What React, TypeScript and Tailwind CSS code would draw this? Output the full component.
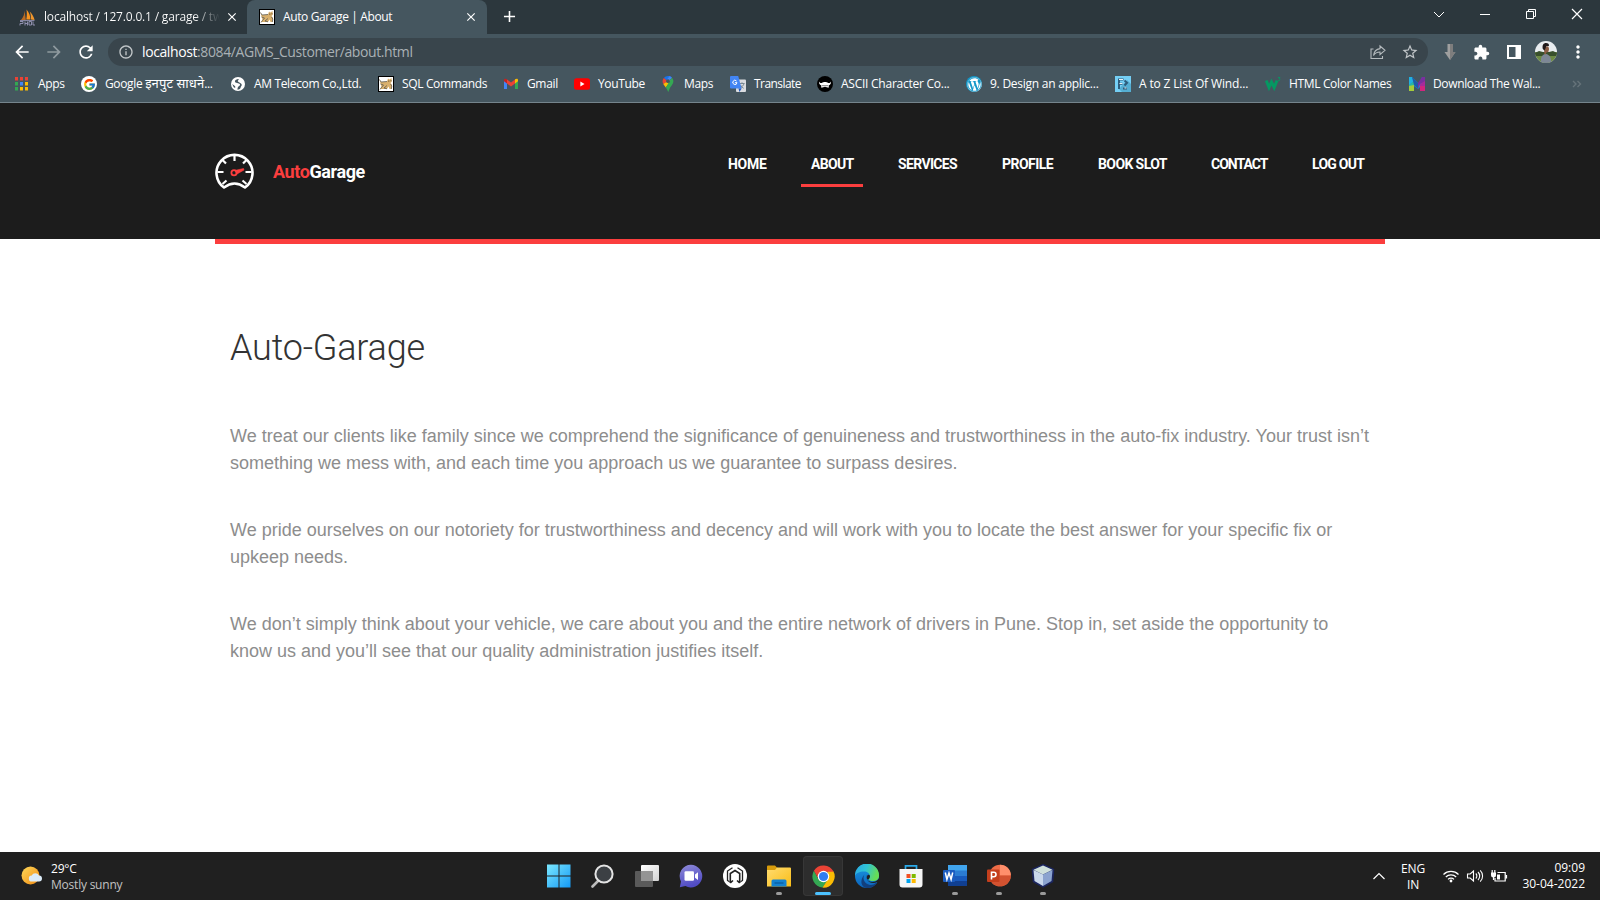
import React from "react";
import { FcGoogle } from "react-icons/fc";
import { FaWordpress } from "react-icons/fa";
import { MdArrowBack, MdArrowForward, MdRefresh, MdInfoOutline, MdStarBorder, MdExtension, MdMoreVert, MdClose, MdAdd } from "react-icons/md";

function CatIcon() {
  return (
    <svg viewBox="0 0 16 16" className="size-4 shrink-0">
      <rect width="16" height="16" fill="#000" />
      <rect x="1" y="1" width="14" height="14" fill="#fff" />
      <path d="M1.500 3.500l1.500 2.500 6-.5 1-3 1.500 1 2-1.500.3 3.500-1.300 1.500 1.500 2-.5 4h-2l-1-2.500-1.500 2.500H2l1.500-2.500-1-3z" fill="#d9b06c" />
      <path d="M1.500 3.500L3 6l6-.5M2.500 8L5.500 9 3.500 11.500 2 13.500M9 9.500L6 12l3 .8M12.500 8l1.300 2-.5 3" stroke="#5e5a52" strokeWidth=".8" fill="none" />
      <circle cx="10.800" cy="5" r=".6" fill="#3a2a18" />
      <circle cx="13" cy="4.800" r=".5" fill="#3a2a18" />
    </svg>
  );
}

function MySqlIcon() {
  return (
    <svg viewBox="0 0 17 17" className="h-[17px] w-[17px] shrink-0">
      <path d="M2 11C4.500 8 5.500 5 5.600 1.500L6.800 11z" fill="#b96a22" />
      <path d="M7.300 10.500C8 7 8 4 7.500 .500 10 3 11.500 7 11.400 10.500z" fill="#f7931e" />
      <path d="M12 10.500C12 7 11.500 4.500 10.700 2.500 13 4.500 15 8 15.600 11z" fill="#f0962c" />
      <path d="M1 12.500h3v2H1v2M6 12.500v4M6 14.500h2M8.500 12.500v4M10 12.500h2.500v3.500H10zM14 12.500v3.500h2M1 11.600h14.500" stroke="#9997b8" strokeWidth=".9" fill="none" />
    </svg>
  );
}

function AppsIcon() {
  const colors = ["#ea4335", "#ea4335", "#ea4335", "#34a853", "#4285f4", "#fbbc04", "#34a853", "#fbbc04", "#fbbc04"];
  return (
    <svg viewBox="0 0 14 14" className="size-3.5 shrink-0">
      {colors.map((c, i) => (
        <rect key={i} x={(i % 3) * 5 + 1} y={Math.floor(i / 3) * 5} width="3" height="3.500" fill={c} />
      ))}
    </svg>
  );
}

function GoogleIcon() {
  return (
    <span className="flex size-4 shrink-0 items-center justify-center rounded-full bg-white">
      <FcGoogle size={13} />
    </span>
  );
}

function GlobeIcon() {
  return (
    <svg viewBox="0 0 16 16" className="size-4 shrink-0">
      <circle cx="8" cy="8" r="7" fill="#fff" />
      <path d="M8 3c-2 .3-3.500 1.500-3 3 .5 1 2 .8 3 1.200s2 .3 2 1.500-1.500 1.300-2 2.300-.3 2-.8 2.600c2 .2 3.300-.9 3.500-2.300.3-1 1.300-1.600 1-2.800S10 7 9 6.300 7.500 5.500 8 4.600 9.500 3.500 8 3zM2.200 8l3 2.300 0 1.700-1.500-.8z" fill="#45565f" />
    </svg>
  );
}

function GmailIcon() {
  return (
    <svg viewBox="0 0 16 16" className="size-4 shrink-0">
      <path d="M1 4v9h3V7z" fill="#4285f4" />
      <path d="M12 7v6h3V4z" fill="#34a853" />
      <path d="M4 3.500l4 3 4-3v4l-4 3-4-3z" fill="#ea4335" />
      <path d="M1 4c0-1.500 1.500-1.800 3-.7v4.200L1 5.200z" fill="#c5221f" />
      <path d="M15 4c0-1.500-1.500-1.800-3-.7v4.200l3-2.300z" fill="#fbbc04" />
    </svg>
  );
}

function YouTubeIcon() {
  return (
    <svg viewBox="0 0 16 16" className="size-4 shrink-0">
      <rect x="0" y="2.300" width="16" height="11.400" rx="2.500" fill="#f00" />
      <path d="M6.400 5.600v4.800L10.500 8z" fill="#fff" />
    </svg>
  );
}

function MapsIcon() {
  return (
    <svg viewBox="0 0 16 16" className="size-4 shrink-0">
      <path d="M8 0a5.400 5.400 0 0 0-4.200 2L8 5.500l3.800-4.200A5.400 5.400 0 0 0 8 0z" fill="#1a73e8" />
      <path d="M3.800 2a5.500 5.500 0 0 0-.5 6L8 5.400z" fill="#ea4335" />
      <path d="M3.300 8c.7 1.300 1.700 2.300 2.500 3.500L12 3.500 8 5z" fill="#fbbc04" />
      <path d="M11.800 1.500C14.500 4.500 13.300 7.700 11.300 10 9.500 12 9 14.500 8.300 16 7.500 14.500 7 13 5.800 11.500z" fill="#34a853" />
      <path d="M8 0c1.600 0 3 .6 3.900 1.600L9 5.200 6.800 3.700 9.500.2z" fill="#4285f4" />
      <circle cx="8" cy="5.200" r="1.900" fill="#45565f" />
    </svg>
  );
}

function TranslateIcon() {
  return (
    <svg viewBox="0 0 16 16" className="size-4 shrink-0">
      <rect x="6" y="3.500" width="10" height="12.500" rx="1" fill="#dadce0" />
      <path d="M9.500 7.500h5M12 6.300v1.200M14 7.500c-.5 2-2 3.500-3.700 4.500M10.500 9c.6 1.500 1.800 2.500 3.200 3.300" stroke="#70808a" fill="none" strokeWidth=".9" />
      <path d="M1 0h7.200l3.400 12.500H1a1 1 0 0 1-1-1V1a1 1 0 0 1 1-1z" fill="#4285f4" />
      <path d="M8.500 12.500h3.100L9.500 16z" fill="#1b57c0" />
      <path d="M6.500 5A2.100 2.100 0 1 0 7 6.700H4.900" stroke="#fff" strokeWidth="1" fill="none" />
    </svg>
  );
}

function AsciiIcon() {
  return (
    <svg viewBox="0 0 16 16" className="size-4 shrink-0">
      <circle cx="8" cy="8" r="8" fill="#000" />
      <path d="M2 5.500c.6 1.300 1.500 1.700 2.800 1.500C5.700 6.200 6.800 6 8 6s2.300.2 3.200 1c1.300.2 2.200-.2 2.800-1.500.2 1.900-.5 3.100-2 3.700l-.4 2.500-3.600-.9-3.600.9L4 9.200C2.500 8.600 1.800 7.400 2 5.500z" fill="#fff" />
      <path d="M4.500 9.700h7" stroke="#000" strokeWidth=".5" />
    </svg>
  );
}

function WordPressIcon() {
  return (
    <span className="flex size-4 shrink-0 items-center justify-center rounded-full bg-[#1297c9] text-white">
      <FaWordpress size={15} />
    </span>
  );
}

function AzIcon() {
  return (
    <svg viewBox="0 0 16 16" className="size-4 shrink-0">
      <rect width="16" height="16" fill="#74cff5" />
      <path d="M12 4l4 4v8H7l-3-3z" fill="#55aed2" />
      <path d="M4 13V3.500h4.500M4 7.800h3.500M9.500 4.500l2.500 2.300-2.500 2.700M8 12.500h4" stroke="#2c5c7c" strokeWidth="2" fill="none" />
      <path d="M4 3.500h4M4.500 7.500h3M9.500 12h2" stroke="#fff" strokeWidth=".9" />
    </svg>
  );
}

function W3Icon() {
  return (
    <svg viewBox="0 0 16 16" className="size-4 shrink-0">
      <path d="M1.200 4.500l2.800 7L6.500 6l2.700 5.500 2.800-7" stroke="#059862" strokeWidth="3" fill="none" />
      <path d="M13 1.500h2l-1 1.400c1.500.2 1.200 2.200-1 1.700" stroke="#059862" strokeWidth=".9" fill="none" />
    </svg>
  );
}

function MIcon() {
  return (
    <svg viewBox="0 0 16 16" className="size-4 shrink-0">
      <path d="M0 1h3l6 6v2l2-2V6l2-5h3v14h-5v-4l-2 2-4-3v5H0z" fill="#1b8fd6" />
      <path d="M0 1h3l2 4-5 4z" fill="#22b0e0" />
      <path d="M0 9l5-4v5H0z" fill="#27b7a4" />
      <path d="M0 10l5-1v6H0z" fill="#a5cc3a" />
      <path d="M3 1l6 6v6l-4-4z" fill="#1f5aa8" />
      <path d="M16 1v5l-5 2-2 5V7l4-6z" fill="#7a2f9f" />
      <path d="M16 5v5l-5 1V8z" fill="#a72a9b" />
      <path d="M11 10l5 0v5h-5z" fill="#d1267f" />
    </svg>
  );
}

const bookmarks = [
  { key: "apps", label: "Apps", icon: <AppsIcon />, box: "w-[67px] gap-[10px]" },
  { key: "input", label: <>Google <span className="text-[13px] tracking-[0.1px]">इनपुट साधने</span>...</>, icon: <GoogleIcon />, box: "w-[149px] gap-2" },
  { key: "am", label: "AM Telecom Co.,Ltd.", icon: <GlobeIcon />, box: "w-[148px] gap-2" },
  { key: "sql", label: "SQL Commands", icon: <CatIcon />, box: "w-[125px] gap-2" },
  { key: "gmail", label: "Gmail", icon: <GmailIcon />, box: "w-[71px] gap-2" },
  { key: "youtube", label: "YouTube", icon: <YouTubeIcon />, box: "w-[86px] gap-2" },
  { key: "maps", label: "Maps", icon: <MapsIcon />, box: "w-[70px] gap-2" },
  { key: "translate", label: "Translate", icon: <TranslateIcon />, box: "w-[87px] gap-2 tracking-[-0.55px]" },
  { key: "ascii", label: "ASCII Character Co...", icon: <AsciiIcon />, box: "w-[149px] gap-2 tracking-[-0.25px]" },
  { key: "design", label: "9. Design an applic...", icon: <WordPressIcon />, box: "w-[149px] gap-2 tracking-[-0.25px]" },
  { key: "az", label: "A to Z List Of Wind...", icon: <AzIcon />, box: "w-[150px] gap-2 tracking-[-0.15px]" },
  { key: "html", label: "HTML Color Names", icon: <W3Icon />, box: "w-[144px] gap-2" },
  { key: "wal", label: "Download The Wal...", icon: <MIcon />, box: "w-[162px] gap-2" },
];

function TabStrip() {
  return (
    <div className="flex h-[34px] bg-[#2c373d] text-[12px] tracking-[-0.26px] text-white">
      <div className="flex w-[247px] items-center pl-[19px]">
        <MySqlIcon />
        <div className="ml-2 w-[176px] overflow-hidden whitespace-nowrap bg-gradient-to-r from-white from-85% to-transparent bg-clip-text tracking-[-0.18px] text-transparent">
          localhost / 127.0.0.1 / garage / tw
        </div>
        <MdClose size={14} className="ml-[5px]" />
      </div>
      <div className="flex w-[240px] items-center rounded-t-lg bg-[#45565f] pl-3">
        <CatIcon />
        <div className="ml-2 w-[181px] whitespace-nowrap tracking-[-0.38px]">Auto Garage | About</div>
        <MdClose size={14} />
      </div>
      <MdAdd size={19} className="ml-[13px] mt-[7px]" />
      <div className="ml-auto flex h-7 items-center">
        <svg viewBox="0 0 46 28" className="h-7 w-[46px]" fill="none" stroke="#fff"><path d="M18 12l5 5 5-5" /></svg>
        <svg viewBox="0 0 46 28" className="h-7 w-[46px]" fill="none" stroke="#fff"><path d="M18 14.500h10" /></svg>
        <svg viewBox="0 0 46 28" className="h-7 w-[46px]" fill="none" stroke="#fff"><path d="M18.500 11.500h7v7h-7zM20.500 11.500v-2h7v7h-2" /></svg>
        <svg viewBox="0 0 46 28" className="h-7 w-[46px]" fill="none" stroke="#fff" strokeWidth="1.200"><path d="M18 9l10 10M28 9L18 19" /></svg>
      </div>
    </div>
  );
}

function Toolbar() {
  return (
    <div className="flex h-9 items-center bg-[#45565f] text-white">
      <div className="flex w-[108px] items-center gap-[13px] pl-3">
        <MdArrowBack size={20} />
        <MdArrowForward size={20} className="-ml-px text-[#8f9a9f]" />
        <MdRefresh size={20} className="-ml-px" />
      </div>
      <div className="flex h-7 w-[1320px] items-center rounded-full bg-[#39454c] pl-[10px] pr-[9px]">
        <MdInfoOutline size={16} className="text-[#c3c8ca]" />
        <div className="-mt-0.5 ml-2 whitespace-nowrap text-[14px] tracking-[-0.4px] text-[#a9b1b5]">
          <span className="text-white">localhost</span>:8084/AGMS_Customer/about.html
        </div>
        <svg viewBox="0 0 16 16" className="ml-auto size-4" fill="none" stroke="#b4babd" strokeWidth="1.100">
          <path d="M3.500 5H1v9.500h11.500V12M10 2l5 4.300-5 4.200V8C7 8 5 9 3.500 11.500 4 7.500 6.500 5 10 4.600z" />
        </svg>
        <MdStarBorder size={18} className="ml-[15px] text-[#c0c5c8]" />
      </div>
      <div className="flex flex-1 items-center">
        <svg viewBox="0 0 16 18" className="ml-[14px] h-[18px] w-4">
          <path d="M5.500 1h5.500v8h2.500L8 17l-5.500-8h3z" fill="#9f9f9f" />
          <path d="M8 1h3v8h2.500L8 17z" fill="#7d7d7d" />
        </svg>
        <MdExtension size={17} className="ml-[15px]" />
        <svg viewBox="0 0 14 14" className="ml-[17px] size-3.5"><path d="M1 1h12v12H1z" fill="none" stroke="#fff" strokeWidth="2" /><path d="M8.500 0H14v14H8.500z" fill="#fff" /></svg>
        <Avatar />
        <MdMoreVert size={20} className="ml-[11px]" />
      </div>
    </div>
  );
}

function Avatar() {
  return (
    <svg viewBox="0 0 22 22" className="ml-[14px] size-[22px]">
      <defs><clipPath id="face"><circle cx="11" cy="11" r="11" /></clipPath></defs>
      <g clipPath="url(#face)">
        <rect width="22" height="22" fill="#e9edf0" />
        <rect y="11" width="22" height="11" fill="#6d8a45" />
        <path d="M0 12l4-2 4 1 6 0 4-1 4 2v3H0z" fill="#39502d" />
        <path d="M6 22c-.5-5 .5-8 4-9 4 0 6 2.500 6.500 9z" fill="#7d8796" />
        <path d="M9 5.500h4.300l.8 2.500-.8 3-2 .5-.5 2-1.500-.5z" fill="#8b5d45" />
        <path d="M7.800 8C7 4 8.500 2 11 2c2.300 0 3.300 1.200 2.900 3l-2.700.3-.7 2.200-1 2z" fill="#20191a" />
      </g>
    </svg>
  );
}

function BookmarksBar() {
  return (
    <div className="flex h-[33px] items-start border-b border-[#75848c] bg-[#45565f] pl-[14px] pt-[6px] text-[12px] leading-4 tracking-[-0.35px] text-white">
      {bookmarks.map((b) => (
        <div key={b.key} className={`flex h-4 shrink-0 items-center whitespace-nowrap ${b.box}`}>
          {b.icon}
          <span className="-mt-px">{b.label}</span>
        </div>
      ))}
      <svg viewBox="0 0 10 8" className="ml-px mt-1 h-2 w-2.5" fill="none" stroke="#66737a" strokeWidth="1.400"><path d="M1 1l3 3-3 3M5.500 1l3 3-3 3" /></svg>
    </div>
  );
}

function GaugeLogo() {
  return (
    <svg viewBox="0 0 40 38" className="h-[38px] w-10" fill="none" stroke="#fff">
      <path d="M9 35.500A18 18 0 1 1 30 35.500Q19.500 27.500 9 35.500z" strokeWidth="2.600" strokeLinejoin="round" />
      <path d="M19.500 3v6M2.500 20h6M30.500 20h6M7.500 8l3.500 3.500M31.500 8l-3.500 3.500M7.500 32l4-3.500M31.500 32l-4-3.500" strokeWidth="2.200" />
      <circle cx="19" cy="20.800" r="2.600" stroke="#fb3e3e" strokeWidth="1.800" />
      <path d="M19.700 18.500L28.500 16.500 29 18 22 22z" fill="#fb3e3e" stroke="#fb3e3e" strokeWidth=".6" />
    </svg>
  );
}

const nav = [
  { label: "HOME", box: "w-[58px] tracking-[-0.3px]" },
  { label: "ABOUT", box: "w-[62px] tracking-[-0.65px]", active: true },
  { label: "SERVICES", box: "w-[79px] tracking-[-0.65px]" },
  { label: "PROFILE", box: "w-[71px] tracking-[-0.55px]" },
  { label: "BOOK SLOT", box: "w-[88px] tracking-[-0.6px]" },
  { label: "CONTACT", box: "w-[76px] tracking-[-1px]" },
  { label: "LOG OUT", box: "w-[73px] tracking-[-0.75px]" },
];

function SiteHeader() {
  return (
    <header className="flex h-[136px] items-start bg-[#1c1c1c] pl-[215px] pt-[49px] font-['Roboto',sans-serif] text-white">
      <div className="flex w-[503px] items-center">
        <GaugeLogo />
        <div className="ml-[18px] text-[18px] font-bold tracking-[-0.4px]"><span className="text-[#fb3e3e]">Auto</span>Garage</div>
      </div>
      <nav className="mt-px flex gap-[25px] text-[14px] font-bold">
        {nav.map((n) => (
          <a key={n.label} className={`flex h-[34px] whitespace-nowrap border-b-[3px] pl-[10px] pt-px ${n.active ? "border-[#fb3e3e]" : "border-transparent"} ${n.box}`}>
            {n.label}
          </a>
        ))}
      </nav>
    </header>
  );
}

function Article() {
  return (
    <main className="flex-1 bg-white">
      <div className="mx-[215px] h-[5px] bg-[#fb3e3e]" />
      <div className="pl-[230px]">
        <h1 className="mt-[80px] font-['Roboto',sans-serif] text-[36px] font-[350] leading-[48px] tracking-[-0.2px] text-[#333]">Auto-Garage</h1>
        <div className="mt-[51px] space-y-10 whitespace-nowrap font-['Liberation_Sans',sans-serif] text-[18px] leading-[27px] text-[#8d8d8d]">
          <p>We treat our clients like family since we comprehend the significance of genuineness and trustworthiness in the auto-fix industry. Your trust isn’t<br />something we mess with, and each time you approach us we guarantee to surpass desires.</p>
          <p>We pride ourselves on our notoriety for trustworthiness and decency and will work with you to locate the best answer for your specific fix or<br />upkeep needs.</p>
          <p>We don’t simply think about your vehicle, we care about you and the entire network of drivers in Pune. Stop in, set aside the opportunity to<br />know us and you’ll see that our quality administration justifies itself.</p>
        </div>
      </div>
    </main>
  );
}

function StartIcon() {
  return (
    <svg viewBox="0 0 24 24" className="size-6">
      <defs><linearGradient id="st" x1="0" y1="0" x2="1" y2="1"><stop offset="0" stopColor="#7be8ff" /><stop offset="1" stopColor="#1499f5" /></linearGradient></defs>
      <path d="M0 .5h11.500v11H0zM12.500 .5h11v11h-11zM0 12.500h11.500v11H0zM12.500 12.500h11v11h-11z" fill="url(#st)" />
    </svg>
  );
}
function SearchIcon() {
  return (
    <svg viewBox="0 0 24 24" className="size-6">
      <path d="M7.500 16.500l-6 6" stroke="#bcbcbc" strokeWidth="2.600" strokeLinecap="round" />
      <circle cx="13" cy="10" r="8.600" fill="#3c4044" stroke="#e4e4e4" strokeWidth="2" />
    </svg>
  );
}
function TaskViewIcon() {
  return (
    <svg viewBox="0 0 24 24" className="size-6">
      <defs><linearGradient id="tv" x1="0" y1="0" x2="1" y2="1"><stop offset="0" stopColor="#fff" /><stop offset="1" stopColor="#d2d2d2" /></linearGradient></defs>
      <rect x="6" y="1" width="18" height="16" rx="1" fill="url(#tv)" />
      <rect x="0" y="7" width="18" height="16" rx="1" fill="#5a5a5a" />
      <rect x="6" y="7" width="12" height="10" fill="#949494" />
    </svg>
  );
}
function ChatIcon() {
  return (
    <svg viewBox="0 0 24 24" className="size-6">
      <defs><linearGradient id="ch" x1="0" y1="0" x2=".3" y2="1"><stop offset="0" stopColor="#8f8bd8" /><stop offset="1" stopColor="#504bc4" /></linearGradient></defs>
      <path d="M12 .8A11.300 11.300 0 1 1 6.500 22L.8 23.200 2 17.500A11.300 11.300 0 0 1 12 .8z" fill="url(#ch)" />
      <rect x="5.500" y="7.300" width="9.500" height="9.500" rx="1.300" fill="#fff" />
      <path d="M16 10.500l3-2.200v7.700l-3-2.200z" fill="#fff" />
    </svg>
  );
}
function HexIcon() {
  return (
    <svg viewBox="0 0 24 24" className="size-6">
      <circle cx="12" cy="12" r="12" fill="#fff" />
      <path d="M9.500 3.800L4.500 7v9.500l2 1.300M14.500 3.800L19.500 7v9.500l-2 1.300" fill="none" stroke="#222" strokeWidth="1.300" />
      <path d="M7.300 19V9.500L12 6.500l4.700 3V19M7.300 18.800L10 16.500M16.700 18.800L14 16.500" fill="none" stroke="#222" strokeWidth="1.600" />
    </svg>
  );
}
function FolderIcon() {
  return (
    <svg viewBox="0 0 24 24" className="size-6">
      <defs><linearGradient id="fo" x1="0" y1="0" x2="1" y2="1"><stop offset="0" stopColor="#ffdc70" /><stop offset="1" stopColor="#f9bd17" /></linearGradient></defs>
      <path d="M0 2.500A1 1 0 0 1 1 1.500h7L10.500 4v3H0z" fill="#d79b0b" />
      <path d="M0 6h8L10 3.500h13a1 1 0 0 1 1 1v18H0z" fill="url(#fo)" />
      <path d="M4.500 22.500V17a1.500 1.500 0 0 1 1.500-1.500h12a1.500 1.500 0 0 1 1.500 1.500v5.500z" fill="#1382d0" />
      <path d="M7.500 19h9" stroke="#0a5ba0" strokeWidth="1.300" />
    </svg>
  );
}
function ChromeIcon() {
  return (
    <svg viewBox="0 0 24 24" className="size-[23px]">
      <path d="M2 6a11.700 11.700 0 0 0 9 17.600L17 15 7 15z" fill="#34a853" />
      <path d="M22 6A11.700 11.700 0 0 1 11 23.600L17.200 14 16 6z" fill="#fbbc04" />
      <path d="M2 6l5.200 9L9 7h13.500A11.700 11.700 0 0 0 2 6z" fill="#ea4335" />
      <circle cx="12" cy="12" r="6" fill="#fff" />
      <circle cx="12" cy="12" r="4.800" fill="#2f7df0" />
    </svg>
  );
}
function EdgeIcon() {
  return (
    <svg viewBox="0 0 24 24" className="size-6">
      <defs>
        <linearGradient id="e1" x1="0" y1="0" x2="1" y2=".3"><stop offset="0" stopColor="#2aa7e6" /><stop offset=".5" stopColor="#2fc3d6" /><stop offset="1" stopColor="#66dc56" /></linearGradient>
        <linearGradient id="e2" x1="0" y1="0" x2="0" y2="1"><stop offset="0" stopColor="#1b9be4" /><stop offset="1" stopColor="#0b62bb" /></linearGradient>
      </defs>
      <circle cx="12" cy="12" r="12" fill="url(#e2)" />
      <path d="M0 12A12 12 0 0 1 24 11c.3 4-2.500 6-6 6-3.500 0-4.800-1.300-3.800-2.700C16 12 14 7.500 9.500 7.500 5 7.300 1 9 0 12z" fill="url(#e1)" />
      <path d="M10 10c-3 3-1.500 10 5 11 3 .3 5-.7 7-3-1 4-6 6-10 6C6 23.500 4 16 10 10z" fill="#123f7d" />
      <path d="M12.500 10.500c-3 2.500-.5 7.500 5 7.500 2.500 0 4.500-1 6.500-3.500V20l-2-2c-3 2-9 1-10.500-3.500-.3-1.700 0-3 1-4z" fill="#202020" />
      <path d="M12.700 11c1.500-.7 2.500.5 2.300 1.800-.2 1-1 1.700-.8 2.200l-2 .5c-.7-1.500-.5-3.500.5-4.500z" fill="#202020" />
    </svg>
  );
}
function StoreIcon() {
  return (
    <svg viewBox="0 0 24 24" className="size-6">
      <path d="M6.500 6V1.800h11V6" fill="none" stroke="#2aa9e8" strokeWidth="1.700" />
      <path d="M.5 5h23v15.500a3 3 0 0 1-3 3h-17a3 3 0 0 1-3-3z" fill="#f6f6f6" />
      <path d="M7.500 10h4v4h-4z" fill="#f25022" /><path d="M12.700 10h4v4h-4z" fill="#7fba00" />
      <path d="M7.500 15h4v4h-4z" fill="#00a4ef" /><path d="M12.700 15h4v4h-4z" fill="#ffb900" />
    </svg>
  );
}
function WordIcon() {
  return (
    <svg viewBox="0 0 24 24" className="size-6">
      <path d="M5 1h19v6H5z" fill="#41a5ee" /><path d="M5 6.500h19V12H5z" fill="#2b7cd3" />
      <path d="M5 12h19v5H5z" fill="#185abd" /><path d="M5 17h19v5H5z" fill="#103f91" />
      <rect x="0" y="6" width="12" height="12" rx="1" fill="#1b5cc0" />
      <path d="M2.300 8.500l1.600 7L6 9l2.100 6.500 1.600-7" fill="none" stroke="#fff" strokeWidth="1.500" />
    </svg>
  );
}
function PowerPointIcon() {
  return (
    <svg viewBox="0 0 24 24" className="size-6">
      <circle cx="13" cy="11.500" r="10.800" fill="#ed6c47" />
      <path d="M13 .7A10.800 10.800 0 0 1 23.800 11.500H13z" fill="#ff8f6b" />
      <path d="M2.200 11.500h21.600a10.800 10.800 0 0 1-21.600 0z" fill="#d35230" />
      <rect x="0" y="5.500" width="12.500" height="12.500" rx="1" fill="#c43e1c" />
      <path d="M4.500 15.500V8.300h2.300a2.200 2.200 0 0 1 0 4.400H4.500" fill="none" stroke="#fff" strokeWidth="1.600" />
    </svg>
  );
}
function CubeIcon() {
  return (
    <svg viewBox="0 0 24 24" className="size-6">
      <path d="M12 .8l10.500 4.700-1 12L12 23 2.500 17.500l-1-12z" fill="#29345f" stroke="#1b2560" strokeWidth="1.500" />
      <path d="M12 1.500l9.500 4.300L12 10.500 2.500 5.800z" fill="#cfe0dc" />
      <path d="M2.500 6l9.500 4.600V22l-8.500-5z" fill="#c9d8ec" />
      <path d="M21.500 6L12 10.600V22l8.500-5z" fill="#8ba3cf" />
    </svg>
  );
}

const apps = [
  { icon: <StartIcon />, mark: "" },
  { icon: <SearchIcon />, mark: "" },
  { icon: <TaskViewIcon />, mark: "" },
  { icon: <ChatIcon />, mark: "" },
  { icon: <HexIcon />, mark: "" },
  { icon: <FolderIcon />, mark: "w-1.5 bg-[#9a9a9a]" },
  { icon: <ChromeIcon />, mark: "w-4 bg-[#4cc2ff]", active: true },
  { icon: <EdgeIcon />, mark: "" },
  { icon: <StoreIcon />, mark: "" },
  { icon: <WordIcon />, mark: "w-1.5 bg-[#9a9a9a]" },
  { icon: <PowerPointIcon />, mark: "w-1.5 bg-[#9a9a9a]" },
  { icon: <CubeIcon />, mark: "w-1.5 bg-[#9a9a9a]" },
];

function Taskbar() {
  return (
    <footer className="flex h-12 items-center bg-[#202020] text-white">
      <div className="flex w-[539px] items-center pl-[21px]">
        <svg viewBox="0 0 22 20" className="h-5 w-[22px]">
          <defs><linearGradient id="sun" x1="0" y1="0" x2="1" y2="1"><stop offset="0" stopColor="#ffd95a" /><stop offset="1" stopColor="#f08a12" /></linearGradient></defs>
          <circle cx="9.500" cy="9.500" r="9" fill="url(#sun)" />
          <path d="M11 15.500a3 3 0 0 1-.3-6 4 4 0 0 1 7.300 0 3 3 0 0 1 0 6z" fill="#dcecf8" />
        </svg>
        <div className="ml-2 pt-[2px] text-[12px] leading-4 tracking-[-0.22px]">
          <div>29°C</div>
          <div className="text-[#c2c2c2]">Mostly sunny</div>
        </div>
      </div>
      <div className="flex gap-1">
        {apps.map((a, i) => (
          <div key={i} className={`flex h-10 w-10 flex-col items-center justify-end rounded ${a.active ? "bg-[#2d2d2d] ring-1 ring-inset ring-[#373737]" : ""}`}>
            <div className="flex h-6 items-center">{a.icon}</div>
            <div className={`mb-px mt-1 h-[3px] rounded-full ${a.mark}`} />
          </div>
        ))}
      </div>
      <div className="ml-auto flex items-center pr-[15px] text-[12px] leading-4">
        <svg viewBox="0 0 14 8" className="h-2 w-3.5" fill="none" stroke="#fff" strokeWidth="1.200"><path d="M1.500 7L7 1.500 12.500 7" /></svg>
        <div className="ml-[15px] w-6 pt-[2px] text-center tracking-[-0.2px]">ENG<br />IN</div>
        <svg viewBox="0 0 18 14" className="ml-[17px] h-3.5 w-[18px]" fill="none" stroke="#fff" strokeWidth="1.200">
          <path d="M1.500 5.500a10.500 10.500 0 0 1 15 0M3.800 8a7.300 7.300 0 0 1 10.400 0M6 10.300a4.200 4.200 0 0 1 6 0" /><circle cx="9" cy="12" r="1.400" fill="#fff" stroke="none" />
        </svg>
        <svg viewBox="0 0 18 14" className="ml-[6px] h-3.5 w-[18px]" fill="none" stroke="#fff" strokeWidth="1.100">
          <path d="M1.500 5h2.700l3.300-3v10L4.200 9H1.500zM9.800 4.500a3.500 3.500 0 0 1 0 5M12 3a5.600 5.600 0 0 1 0 8M14.200 1.300a8 8 0 0 1 0 11.400" />
        </svg>
        <svg viewBox="0 0 18 14" className="ml-[6px] h-3.5 w-[18px]" fill="none" stroke="#fff" strokeWidth="1.200">
          <path d="M7.500 3.500h7.700v8.500H5V9M16.500 6v3.500" /><path d="M7 5.500h3v5H7z" fill="#fff" stroke="none" /><path d="M1 3.500h5v2.500a2.500 2.500 0 0 1-5 0z" fill="#fff" stroke="none" /><path d="M2.200 1v3M4.800 1v3M3.500 8v3" />
        </svg>
        <div className="ml-[14px] w-[63px] whitespace-nowrap text-right">09:09<br />30-04-2022</div>
      </div>
    </footer>
  );
}

export default function App() {
  return (
    <div className="flex h-[900px] w-[1600px] flex-col overflow-hidden bg-white font-['Open_Sans','Noto_Sans',sans-serif]">
      <TabStrip />
      <Toolbar />
      <BookmarksBar />
      <SiteHeader />
      <Article />
      <Taskbar />
    </div>
  );
}
